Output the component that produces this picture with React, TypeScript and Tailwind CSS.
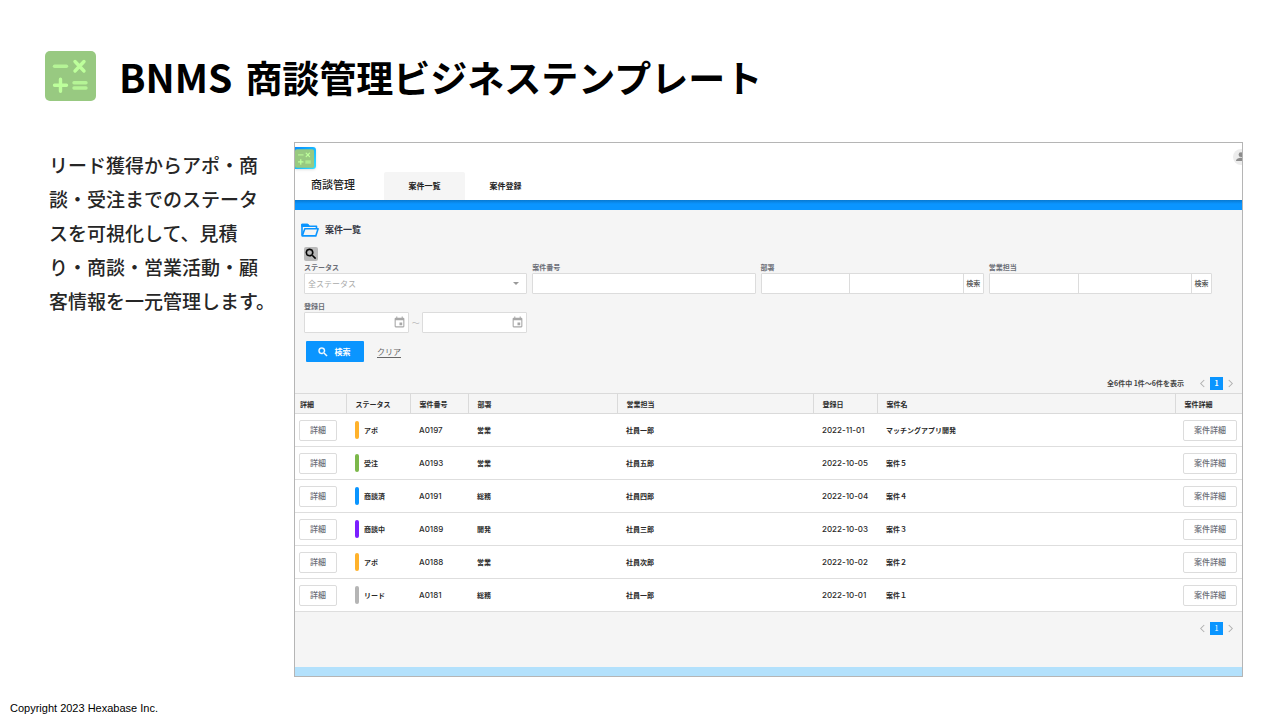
import type { ReactNode } from "react";

type Deal = {
  status: string;
  color: string;
  code: string;
  dept: string;
  rep: string;
  date: string;
  name: string;
};

const deals: Deal[] = [
  { status: "アポ", color: "bg-[#ffb22b]", code: "A0197", dept: "営業", rep: "社員一郎", date: "2022-11-01", name: "マッチングアプリ開発" },
  { status: "受注", color: "bg-[#7cb84a]", code: "A0193", dept: "営業", rep: "社員五郎", date: "2022-10-05", name: "案件５" },
  { status: "商談済", color: "bg-[#0a95ff]", code: "A0191", dept: "総務", rep: "社員四郎", date: "2022-10-04", name: "案件４" },
  { status: "商談中", color: "bg-[#7b1fff]", code: "A0189", dept: "開発", rep: "社員三郎", date: "2022-10-03", name: "案件３" },
  { status: "アポ", color: "bg-[#ffb22b]", code: "A0188", dept: "営業", rep: "社員次郎", date: "2022-10-02", name: "案件２" },
  { status: "リード", color: "bg-[#b5b5b5]", code: "A0181", dept: "総務", rep: "社員一郎", date: "2022-10-01", name: "案件１" },
];

const columns = [
  { label: "詳細", width: "w-[51px]", pad: "pl-[5px]" },
  { label: "ステータス", width: "w-[64px]", pad: "pl-[9px]" },
  { label: "案件番号", width: "w-[58px]", pad: "pl-[9px]" },
  { label: "部署", width: "w-[149px]", pad: "pl-[9px]" },
  { label: "営業担当", width: "w-[196px]", pad: "pl-[9px]" },
  { label: "登録日", width: "w-[64px]", pad: "pl-[9px]" },
  { label: "案件名", width: "", pad: "pl-[9px]" },
  { label: "案件詳細", width: "w-[67px]", pad: "pl-[9px]" },
];

const field = "block h-[21px] w-full min-w-0 border border-[#dcdcdc] bg-white text-[8px] outline-none";

function Logo({ className }: { className: string }) {
  return (
    <svg viewBox="0 0 51 50" className={className} aria-hidden="true">
      <rect width="51" height="50" rx="5" fill="#98c981" />
      <g stroke="#bdff9b" strokeWidth="3.4" strokeLinecap="round" fill="none">
        <path d="M9.5 15.3H21.5" strokeOpacity=".8" />
        <path d="M30 10.5L39 20M39 10.5L30 20" />
        <path d="M9.5 34.3H21.5M15.5 28.3V40.3" />
        <path d="M29 31.8H41M29 37H41" strokeOpacity=".8" />
      </g>
    </svg>
  );
}

function SearchIcon({ className }: { className: string }) {
  return (
    <svg viewBox="0 0 24 24" className={className} fill="currentColor" stroke="currentColor" strokeWidth="0.8" aria-hidden="true">
      <path d="M15.5 14h-.79l-.28-.27A6.47 6.47 0 0 0 16 9.5 6.5 6.5 0 1 0 9.5 16c1.61 0 3.09-.59 4.23-1.57l.27.28v.79l5 4.99L20.49 19l-4.99-5zm-6 0a4.5 4.5 0 1 1 0-9 4.5 4.5 0 0 1 0 9z" />
    </svg>
  );
}

function Field({ label, id, children }: { label: string; id: string; children: ReactNode }) {
  return (
    <div className="min-w-0">
      <label htmlFor={id} className="block text-[7px] leading-[12px] font-bold text-[#6a6d76]">
        {label}
      </label>
      {children}
    </div>
  );
}

function LookupField({ label, id }: { label: string; id: string }) {
  return (
    <Field label={label} id={id}>
      <div className="flex h-[21px] divide-x divide-[#dcdcdc] rounded-[1px] border border-[#dcdcdc] bg-white">
        <input id={id} className="w-0 flex-[88] px-1 text-[8px] outline-none" />
        <input aria-label={`${label}名`} className="w-0 flex-[115] px-1 text-[8px] outline-none" />
        <button type="button" className="w-[19px] shrink-0 text-[7px] font-medium whitespace-nowrap text-[#444]">
          検索
        </button>
      </div>
    </Field>
  );
}

function DateField({ id, label }: { id: string; label?: string }) {
  return (
    <div className="relative w-0 flex-1">
      <input id={id} aria-label={label} className={`${field} rounded-[1px] pr-5 pl-1`} />
      <svg viewBox="0 0 24 24" className="pointer-events-none absolute top-1 right-[3px] size-[13px]" fill="#a8a8a8" aria-hidden="true">
        <path d="M17 12h-5v5h5v-5zM16 1v2H8V1H6v2H5a2 2 0 0 0-2 2v14a2 2 0 0 0 2 2h14a2 2 0 0 0 2-2V5a2 2 0 0 0-2-2h-1V1h-2zm3 18H5V8h14v11z" />
      </svg>
    </div>
  );
}

function Chevron({ d }: { d: string }) {
  return (
    <svg viewBox="0 0 8 10" className="h-[9px] w-[7px]" fill="none" stroke="#b0b0b0" strokeWidth="1.2" aria-hidden="true">
      <path d={d} />
    </svg>
  );
}

function Pager() {
  return (
    <nav aria-label="ページ" className="flex h-[13px] items-center gap-1">
      <button type="button" aria-label="前へ">
        <Chevron d="M6 1L2 5L6 9" />
      </button>
      <button type="button" className="flex size-[13px] items-center justify-center bg-[#0a95ff] text-[7px] text-white">
        1
      </button>
      <button type="button" aria-label="次へ">
        <Chevron d="M2 1L6 5L2 9" />
      </button>
    </nav>
  );
}

function RowButton({ children, className }: { children: ReactNode; className: string }) {
  return (
    <button
      type="button"
      className={`block h-[21px] rounded-[2px] border border-[#dcdcdc] bg-white text-[8px] font-medium whitespace-nowrap text-[#6a6d76] ${className}`}
    >
      {children}
    </button>
  );
}

function DealTable() {
  return (
    <table className="w-full table-fixed border-collapse text-left text-[7px] leading-[10px] text-[#2a2a2a]">
      <thead>
        <tr className="h-5 border-y border-[#dadada]">
          {columns.map((c) => (
            <th key={c.label} scope="col" className={`${c.width} ${c.pad} border-r border-[#dadada] py-0 font-bold last:border-r-0`}>
              {c.label}
            </th>
          ))}
        </tr>
      </thead>
      <tbody className="bg-white font-bold">
        {deals.map((d) => (
          <tr key={d.code} className="h-[33px] border-b border-[#dedede]">
            <td className="pl-1">
              <RowButton className="w-[38px]">詳細</RowButton>
            </td>
            <td className="pl-[9px]">
              <div className="flex items-center gap-[5px]">
                <span className={`h-[18px] w-1 rounded-[2px] ${d.color}`} />
                {d.status}
              </div>
            </td>
            <td className="pl-[9px] font-['Inter',sans-serif] text-[8px] font-medium">{d.code}</td>
            <td className="pl-[9px]">{d.dept}</td>
            <td className="pl-[9px]">{d.rep}</td>
            <td className="pl-[9px] font-['Inter',sans-serif] text-[8px] font-medium whitespace-nowrap">{d.date}</td>
            <td className="pl-[9px]">{d.name}</td>
            <td className="pr-[5px] pl-2">
              <RowButton className="w-full">案件詳細</RowButton>
            </td>
          </tr>
        ))}
      </tbody>
    </table>
  );
}

function AppPanel() {
  return (
    <section className="min-w-0 flex-1 overflow-hidden border border-[#b5b5b5] bg-[#f5f5f5]">
      <header className="bg-white">
        <div className="flex h-[29px] justify-between pt-1">
          <div className="h-[22px] w-[21px] rounded-r-[3px] bg-linear-to-br from-[#0a8dff] to-[#35e0ff] pt-[2px] pr-[2px] pb-px shadow-sm">
            <Logo className="size-full" />
          </div>
          <svg viewBox="0 0 24 24" className="mt-[2px] -mr-[7px] size-4" aria-hidden="true">
            <circle cx="12" cy="12" r="12" fill="#ececec" />
            <circle cx="12" cy="8.5" r="3.6" fill="#8c8c8c" />
            <path d="M4.5 18c0-3.5 4.5-5 7.5-5s7.500 1.500 7.500 5z" fill="#8c8c8c" />
          </svg>
        </div>
        <div className="flex h-7">
          <h2 className="w-[89px] pl-4 text-[11px] leading-[24px] font-medium whitespace-nowrap text-[#222]">商談管理</h2>
          <nav className="flex text-[8px] font-bold text-[#222]">
            <a href="#list" className="flex w-[81px] items-center justify-center rounded-t-[2px] bg-[#f5f5f5]">
              案件一覧
            </a>
            <a href="#new" className="flex w-[81px] items-center justify-center">
              案件登録
            </a>
          </nav>
        </div>
      </header>
      <div className="h-[10px] bg-linear-to-b from-[#0879d0] via-[#0a95ff] via-40% to-[#0a95ff]" />

      <div className="mt-3 flex h-4 items-center gap-[6px] pl-[6px]">
        <svg viewBox="0 0 18 14" className="h-[14px] w-[18px]" fill="none" stroke="#0a95ff" strokeWidth="1.6" strokeLinejoin="round" aria-hidden="true">
          <path d="M1 12.500V1.500H6.500L8 3.300H15.500V5.500" />
          <path d="M1 1.500H6.500L8 3.300H1Z" fill="#0a95ff" />
          <path d="M1.200 12.900L3.800 5.800H17.100L14.800 12.900Z" fill="#f5f5f5" />
        </svg>
        <h3 className="text-[9px] font-bold text-[#333643]">案件一覧</h3>
      </div>

      <form className="mt-[9px] pr-[30px] pl-[9px]" onSubmit={(e) => e.preventDefault()}>
        <button type="button" aria-label="検索条件" className="flex size-[14px] items-center justify-center rounded-[2px] bg-[#b9b9b9] text-black">
          <SearchIcon className="size-[14px]" />
        </button>
        <div className="grid grid-cols-4 gap-x-[5px] gap-y-[6px]">
          <Field label="ステータス" id="status">
            <div className="relative">
              <select id="status" className={`${field} appearance-none rounded-[1px] px-[3px] text-[#aaa]`}>
                <option>全ステータス</option>
              </select>
              <svg viewBox="0 0 6 3" className="pointer-events-none absolute top-[9px] right-2 h-[3px] w-[6px]" fill="#999" aria-hidden="true">
                <path d="M0 0H6L3 3Z" />
              </svg>
            </div>
          </Field>
          <Field label="案件番号" id="code">
            <input id="code" className={`${field} rounded-[1px] px-1`} />
          </Field>
          <LookupField label="部署" id="dept" />
          <LookupField label="営業担当" id="rep" />
          <Field label="登録日" id="from">
            <div className="flex h-[21px] items-center">
              <DateField id="from" />
              <span className="w-[13px] text-center text-[8px] text-[#bbb]">～</span>
              <DateField id="to" label="登録日（終了）" />
            </div>
          </Field>
        </div>
        <div className="mt-2 flex h-[21px] items-center gap-[13px] pl-[2px]">
          <button type="submit" className="flex h-full w-[58px] items-center justify-center gap-[6px] rounded-[1px] bg-[#0a95ff] pr-[3px] text-[8px] font-bold text-white">
            <SearchIcon className="size-3" />
            検索
          </button>
          <button type="reset" className="text-[8px] text-[#666] underline underline-offset-2">
            クリア
          </button>
        </div>
      </form>

      <div className="mt-[15px] mb-[3px] flex items-center justify-end gap-[15px] pr-2 text-[7px] font-bold text-[#444]">
        <span>全6件中 1件〜6件を表示</span>
        <Pager />
      </div>
      <DealTable />
      <div className="flex justify-end pt-[10px] pr-2 pb-8">
        <Pager />
      </div>
      <div className="h-[9px] bg-[#b3e1fc]" />
    </section>
  );
}

export default function App() {
  return (
    <div lang="ja" className="flex min-h-screen flex-col bg-white font-['Noto_Sans_CJK_JP',sans-serif]">
      <header className="flex items-start gap-[23px] pt-[51px] pl-[45px]">
        <Logo className="h-[50px] w-[51px]" />
        <h1 className="flex items-baseline gap-[13px] text-[37px] leading-[50px] font-bold text-black">
          <span className="text-[39px]">BNMS</span> <span>商談管理ビジネステンプレート</span>
        </h1>
      </header>
      <main className="mt-10 flex items-start pr-[37px] pl-[49px]">
        <p className="w-[245px] shrink-0 pt-[6px] text-[19px] leading-[34px] font-medium text-[#262626]">
          リード獲得からアポ・商
          <br />
          談・受注までのステータ
          <br />
          スを可視化して、見積
          <br />
          り・商談・営業活動・顧
          <br />
          客情報を一元管理します。
        </p>
        <AppPanel />
      </main>
      <footer className="mt-auto pb-1 pl-[10px] font-['Liberation_Sans',sans-serif] text-[11px] leading-4 text-black">Copyright 2023 Hexabase Inc.</footer>
    </div>
  );
}
